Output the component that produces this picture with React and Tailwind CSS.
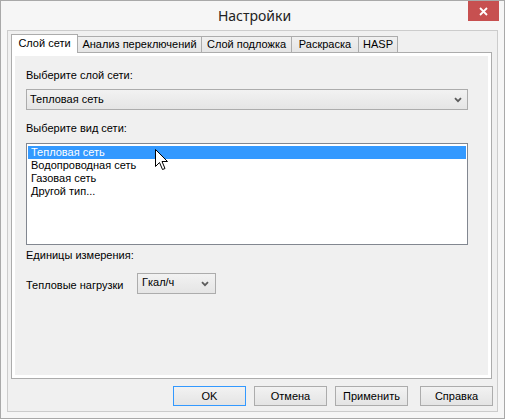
import React from "react";

const Chevron = () => (
  <svg width="8" height="6" viewBox="0 0 8 6" className="block">
    <path d="M1 1.2 L4 4.2 L7 1.2" fill="none" stroke="#5c5c5c" strokeWidth="1.8" />
  </svg>
);

const Cursor = () => (
  <svg width="13" height="22" viewBox="0 0 13 22" className="block">
    <path
      d="M0.5 0.5 L0.5 17.5 L4.5 13.5 L7.5 20.5 L10 19.5 L7 12.5 L12.5 12.5 Z"
      fill="#ffffff"
      stroke="#000000"
      strokeWidth="1"
      strokeLinejoin="miter"
    />
  </svg>
);

const tabs = [
  { label: "Анализ переключений", w: "w-[124px]" },
  { label: "Слой подложка", w: "w-[90px]" },
  { label: "Раскраска", w: "w-[67px]" },
  { label: "HASP", w: "w-[39px]" },
];

const Btn = ({ children, primary, className = "" }) => (
  <div
    className={
      "flex h-[20px] w-[73px] items-center justify-center border bg-linear-to-b from-[#f2f2f2] to-[#e4e4e4] text-[11px] text-black " +
      (primary ? "border-[#3399ff] " : "border-[#acacac] ") +
      className
    }
  >
    {children}
  </div>
);

export default function App() {
  return (
    <div className="flex h-[419px] w-[505px] flex-col border border-[#a9a9a9] bg-[#f6f6f6] font-['Liberation_Sans',Arial,sans-serif] text-[11px] text-black">
      {/* Title bar */}
      <div className="grid h-[29px] grid-cols-[1fr_auto_1fr]">
        <div />
        <div className="flex items-center pl-[4px] font-['Noto_Sans',sans-serif] text-[14px] text-[#222]">
          Настройки
        </div>
        <div className="flex items-start justify-end pr-[5px]">
          <div className="flex h-[20px] w-[31px] items-center justify-center bg-[#c75050]">
            <svg width="9" height="9" viewBox="0 0 9 9" className="block">
              <path d="M1 1 L8 8 M8 1 L1 8" stroke="#ffffff" strokeWidth="1.8" />
            </svg>
          </div>
        </div>
      </div>

      {/* Client area */}
      <div className="mx-[6px] flex h-[382px] flex-col border border-[#cccccc] bg-[#f0f0f0] pt-[3px]">
        {/* Tab strip */}
        <div className="ml-[3px] flex h-[18px] items-end">
          <div className="relative z-10 -mb-px flex h-[19px] w-[67px] items-center justify-center border-x border-t border-[#acacac] bg-white pb-[1px]">
            Слой сети
          </div>
          {tabs.map((t) => (
            <div
              key={t.label}
              className={
                "flex h-[16px] items-center justify-center border-r border-t border-[#acacac] bg-linear-to-b from-[#f0f0f0] to-[#e5e5e5] " +
                t.w
              }
            >
              {t.label}
            </div>
          ))}
        </div>

        {/* Tab panel */}
        <div className="ml-[3px] h-[327px] w-[481px] border border-[#acacac] bg-white p-[3px]">
          <div className="relative flex h-full flex-col bg-[#f0f0f0] pl-[11px]">
            <div className="mt-[12px] h-[14px] leading-[14px]">Выберите слой сети:</div>
            <div className="mt-[7px] flex h-[21px] w-[442px] items-center justify-between border border-[#acacac] bg-linear-to-b from-[#f2f2f2] to-[#e5e5e5] pl-[3px] pr-[5px]">
              <span>Тепловая сеть</span>
              <Chevron />
            </div>

            <div className="mt-[11px] h-[14px] leading-[14px]">Выберите вид сети:</div>
            <div className="mt-[8px] h-[102px] w-[442px] border border-[#828790] bg-white px-[1px] pt-[2px]">
              <div className="flex h-[13px] items-center bg-[#3399ff] pl-[3px] text-white">Тепловая сеть</div>
              <div className="flex h-[13px] items-center pl-[3px]">Водопроводная сеть</div>
              <div className="flex h-[13px] items-center pl-[3px]">Газовая сеть</div>
              <div className="flex h-[13px] items-center pl-[3px]">Другой тип...</div>
            </div>

            <div className="mt-[3px] h-[14px] leading-[14px]">Единицы измерения:</div>
            <div className="mt-[11px] flex h-[21px] items-center">
              <div className="w-[111px] pt-[3px]">Тепловые нагрузки</div>
              <div className="flex h-[21px] w-[79px] items-center justify-between border border-[#acacac] bg-linear-to-b from-[#f2f2f2] to-[#e5e5e5] pb-[2px] pl-[4px] pr-[6px]">
                <span>Гкал/ч</span>
                <span className="pt-[2px]">
                  <Chevron />
                </span>
              </div>
            </div>

            <div className="pointer-events-none absolute left-[140px] top-[93px]">
              <Cursor />
            </div>
          </div>
        </div>

        {/* Buttons */}
        <div className="mt-[7px] flex justify-end pr-[4px]">
          <Btn primary>OK</Btn>
          <Btn className="ml-[8px]">Отмена</Btn>
          <Btn className="ml-[8px]">Применить</Btn>
          <Btn className="ml-[12px]">Справка</Btn>
        </div>
      </div>
    </div>
  );
}
